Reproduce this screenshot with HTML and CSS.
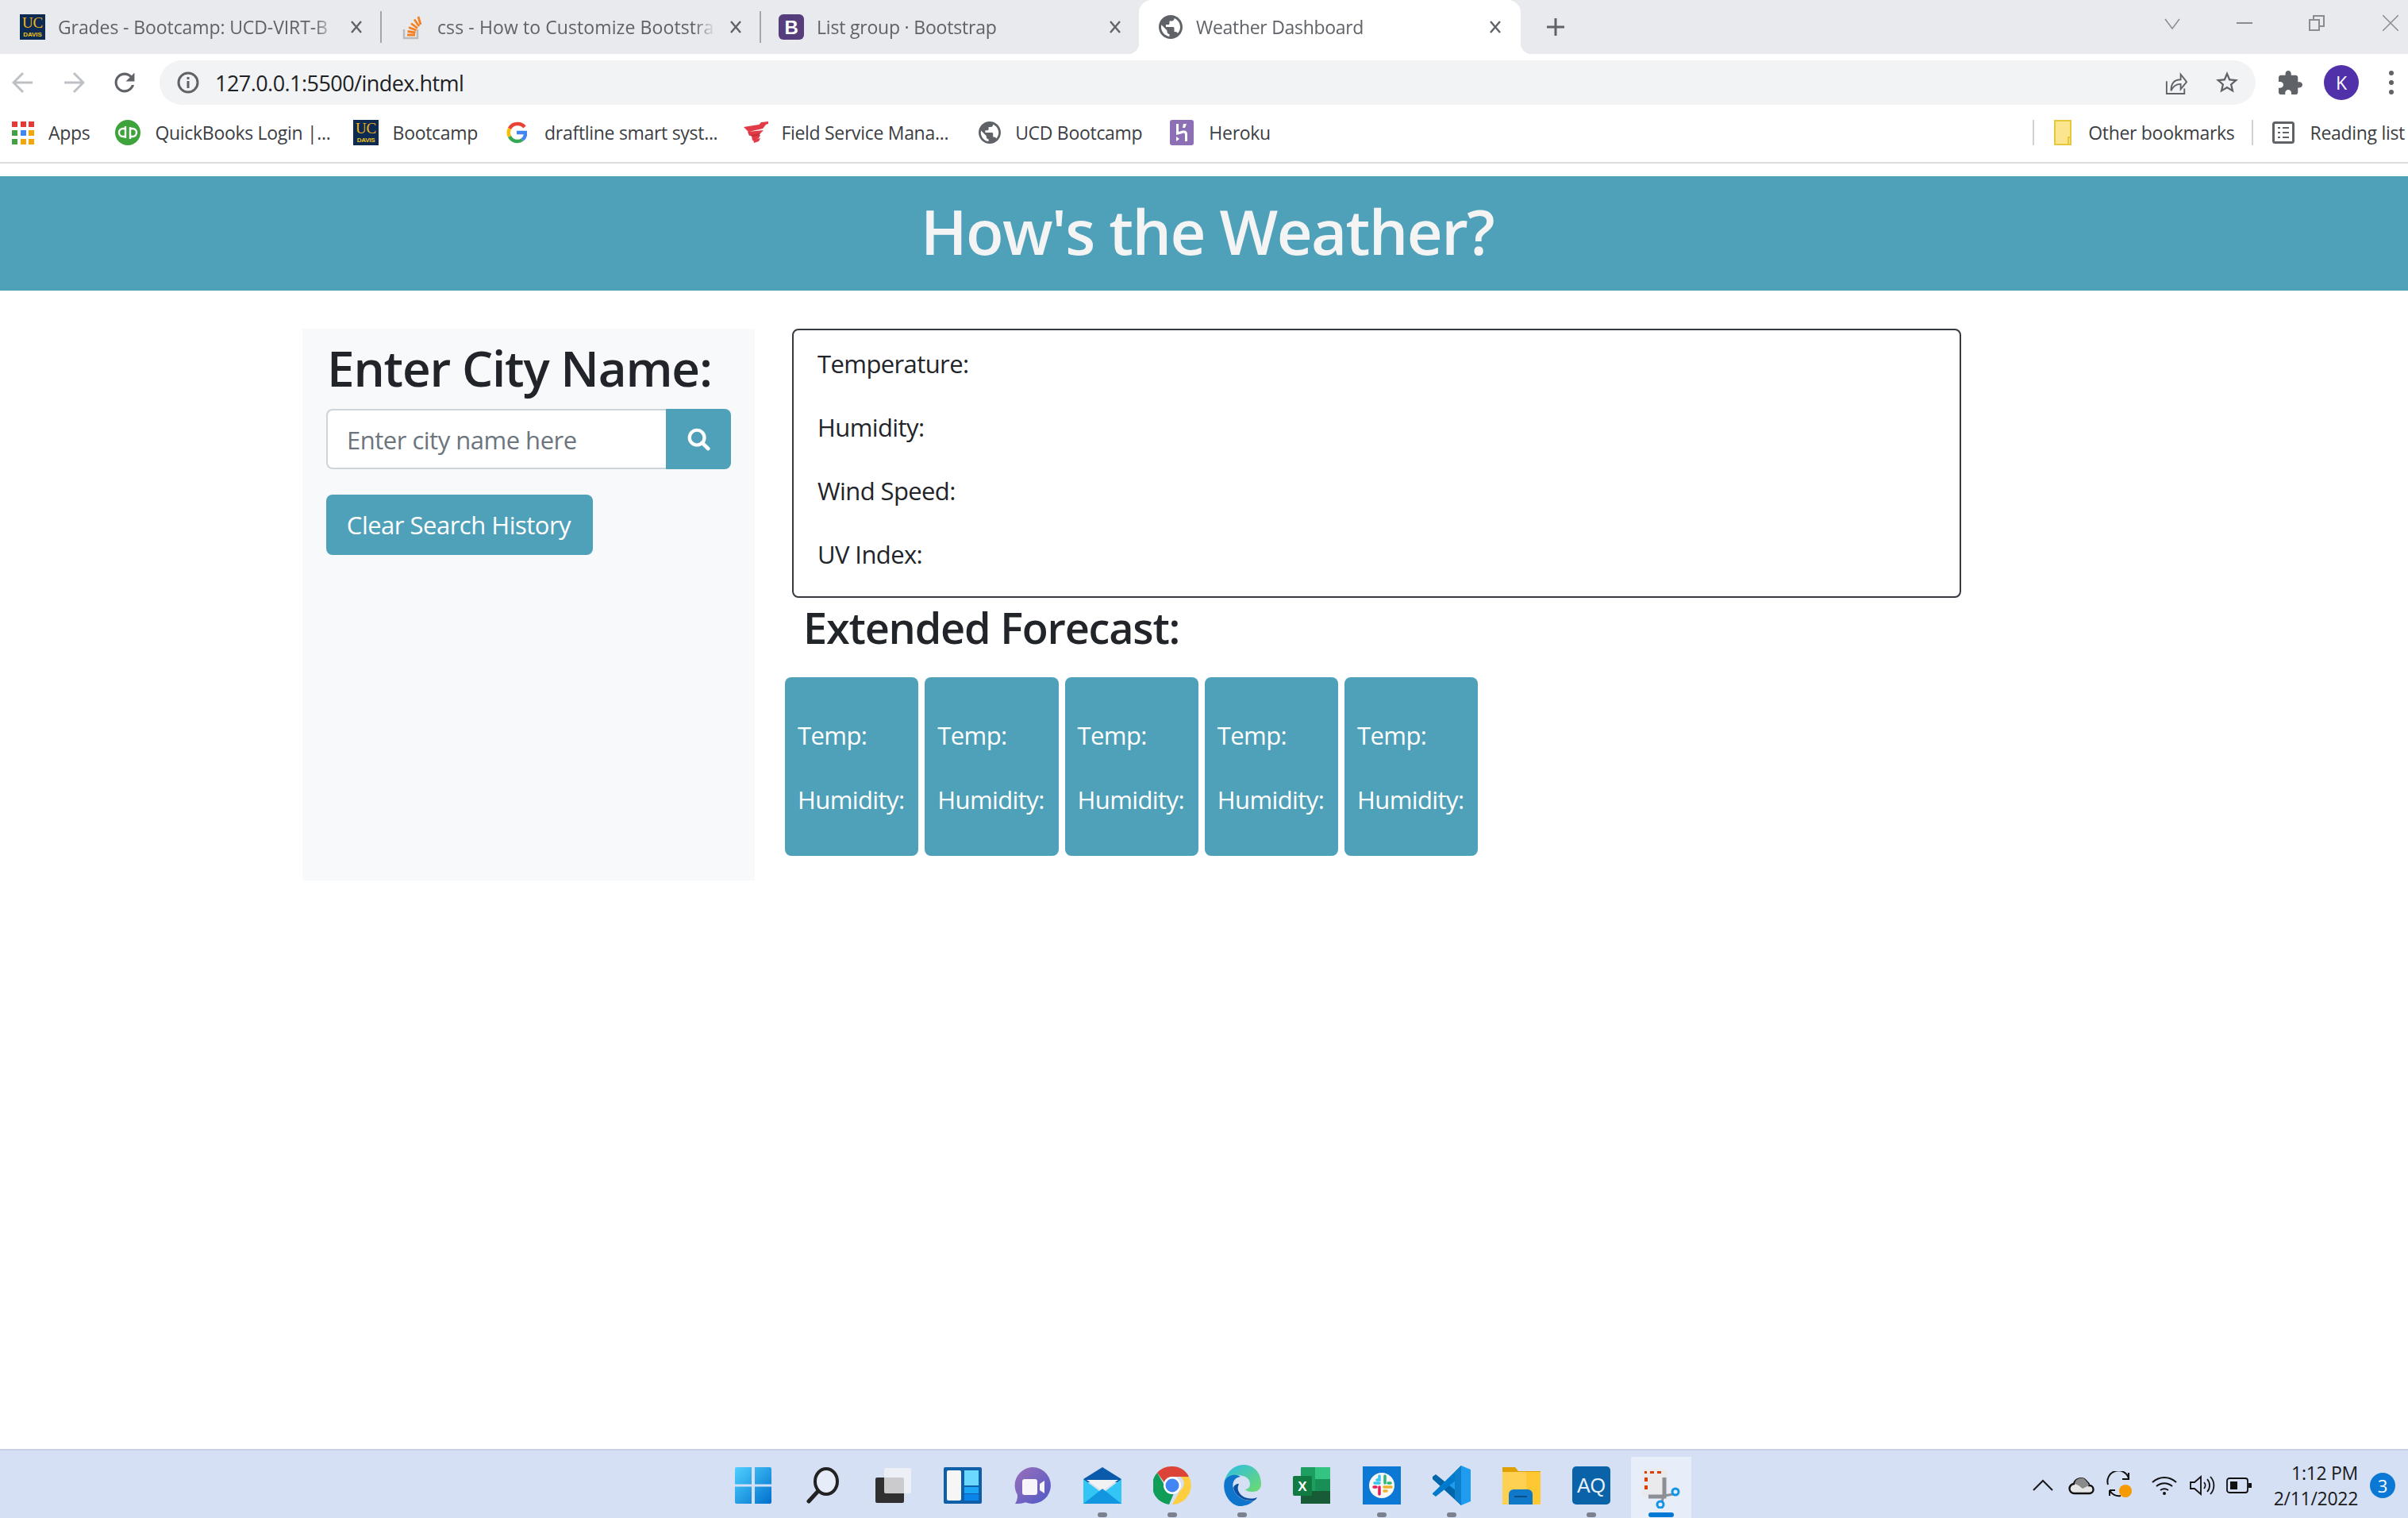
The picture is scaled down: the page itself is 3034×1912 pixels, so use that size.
FILE: index.html
```html
<!DOCTYPE html>
<html lang="en">
<head>
    <meta charset="UTF-8">
    <title>Weather Dashboard</title>
    <link rel="stylesheet" href="styles.css">
</head>
<body>
    <svg class="defs" width="0" height="0">
        <symbol id="uc" viewBox="0 0 32 32">
            <rect width="32" height="32" fill="#0d2a52"/>
            <text x="16" y="17" text-anchor="middle" font-family="Liberation Serif" font-size="19" fill="#f2b51c">UC</text>
            <text x="16" y="28" text-anchor="middle" font-family="Liberation Sans" font-weight="700" font-size="8" fill="#f2c21c">DAVIS</text>
        </symbol>
        <symbol id="globe" viewBox="2 2 20 20">
            <path fill="#5f6368" d="M12 2C6.48 2 2 6.48 2 12s4.48 10 10 10 10-4.48 10-10S17.52 2 12 2zm-1 17.93c-3.95-.49-7-3.85-7-7.93 0-.62.08-1.21.21-1.79L9 15v1c0 1.1.9 2 2 2v1.93zm6.9-2.54c-.26-.81-1-1.39-1.9-1.39h-1v-3c0-.55-.45-1-1-1H8v-2h2c.55 0 1-.45 1-1V7h2c1.1 0 2-.9 2-2v-.41c2.93 1.19 5 4.06 5 7.41 0 2.08-.8 3.97-2.1 5.39z"/>
        </symbol>
        <symbol id="close" viewBox="0 0 16 16">
            <path d="M2 1l12 14M14 1L2 15" stroke="#5f6368" stroke-width="2.400" fill="none"/>
        </symbol>
    </svg>

    <div class="tabstrip">
        <div class="tab tab-first">
            <svg class="favicon"><use href="#uc"/></svg>
            <span class="tab-title">Grades - Bootcamp: UCD-VIRT-B</span>
            <svg class="tab-close"><use href="#close"/></svg>
        </div>
        <div class="tab-sep"></div>
        <div class="tab tab-second">
            <svg class="favicon" viewBox="0 0 32 32">
                <path d="M6 19v11h17V19" fill="none" stroke="#bcbbbb" stroke-width="2.500"/>
                <path d="M10 26h10M10.500 21.500l10 1.500M12 16.500l9.500 3.500M15 11.500l8 6M19 6.500l6 8.500M24 3l3 10" fill="none" stroke="#f48024" stroke-width="2.800"/>
            </svg>
            <span class="tab-title">css - How to Customize Bootstra</span>
            <svg class="tab-close"><use href="#close"/></svg>
        </div>
        <div class="tab-sep"></div>
        <div class="tab tab-third">
            <svg class="favicon" viewBox="0 0 32 32">
                <rect width="32" height="32" rx="6" fill="#563d7c"/>
                <text x="16" y="25" text-anchor="middle" font-family="Liberation Sans" font-weight="700" font-size="24" fill="#fff">B</text>
            </svg>
            <span class="tab-title">List group · Bootstrap</span>
            <svg class="tab-close"><use href="#close"/></svg>
        </div>
        <div class="tab tab-active">
            <svg class="favicon favicon-globe"><use href="#globe"/></svg>
            <span class="tab-title">Weather Dashboard</span>
            <svg class="tab-close"><use href="#close"/></svg>
        </div>
        <svg class="new-tab" viewBox="0 0 24 24"><path d="M12 1v22M1 12h22" stroke="#5f6368" stroke-width="3"/></svg>
        <div class="window-controls">
            <svg viewBox="0 0 20 20"><path d="M1 5l9 12 9-12" fill="none" stroke="#8a8c90" stroke-width="1.500"/></svg>
            <svg viewBox="0 0 20 20"><path d="M0 10h20" stroke="#8a8c90" stroke-width="2"/></svg>
            <svg viewBox="0 0 20 20"><path d="M1 6h12v13H1zM6 6V1h13v13h-6" fill="none" stroke="#8a8c90" stroke-width="2"/></svg>
            <svg class="window-x" viewBox="0 0 20 20"><path d="M0 0l20 20M20 0L0 20" stroke="#8a8c90" stroke-width="1.500"/></svg>
        </div>
    </div>

    <div class="toolbar">
        <svg class="nav-icon" viewBox="0 0 28 28"><path d="M26 14H3M14 2L2 14l12 12" fill="none" stroke="#bdc1c6" stroke-width="3"/></svg>
        <svg class="nav-icon" viewBox="0 0 28 28"><path d="M2 14h23M14 2l12 12-12 12" fill="none" stroke="#bdc1c6" stroke-width="3"/></svg>
        <svg class="nav-icon" viewBox="3 3 18 18"><path fill="#5f6368" d="M17.650 6.350C16.200 4.900 14.210 4 12 4c-4.420 0-7.990 3.580-7.990 8s3.570 8 7.990 8c3.730 0 6.840-2.550 7.730-6h-2.080c-.82 2.330-3.040 4-5.650 4-3.310 0-6-2.690-6-6s2.690-6 6-6c1.660 0 3.140.69 4.220 1.780L13 11h7V4l-2.350 2.350z"/></svg>
        <div class="omnibox">
            <svg class="info-icon" viewBox="0 0 28 28">
                <circle cx="14" cy="14" r="12" fill="none" stroke="#5f6368" stroke-width="3"/>
                <path d="M14 12v9M14 7v3" stroke="#5f6368" stroke-width="3"/>
            </svg>
            <span class="url">127.0.0.1:5500/index.html</span>
            <svg class="omni-icon omni-share" viewBox="0 0 30 32">
                <path d="M2 14v17h24v-7" fill="none" stroke="#5f6368" stroke-width="2"/>
                <path d="M8 27c0-10 5-15 13-15V5l8 10-8 10v-7c-6 0-10 2-13 9z" fill="none" stroke="#5f6368" stroke-width="2"/>
            </svg>
            <svg class="omni-icon" viewBox="2 2 20 20"><path fill="#5f6368" d="M22 9.240l-7.190-.62L12 2 9.190 8.630 2 9.240l5.460 4.730L5.820 21 12 17.270 18.180 21l-1.630-7.030L22 9.240zM12 15.400l-3.760 2.270 1-4.280-3.320-2.880 4.380-.38L12 6.100l1.710 4.040 4.380.38-3.320 2.880 1 4.280L12 15.400z"/></svg>
        </div>
        <svg class="puzzle" viewBox="2 1 21 21"><path fill="#5f6368" d="M20.500 11H19V7c0-1.100-.9-2-2-2h-4V3.500C13 2.120 11.880 1 10.500 1S8 2.120 8 3.500V5H4c-1.100 0-1.990.9-1.990 2v3.800H3.500c1.490 0 2.700 1.210 2.700 2.700s-1.210 2.700-2.700 2.700H2V20c0 1.100.9 2 2 2h3.800v-1.500c0-1.490 1.210-2.700 2.700-2.700 1.490 0 2.700 1.210 2.700 2.700V22H17c1.100 0 2-.9 2-2v-4h1.500c1.380 0 2.500-1.120 2.500-2.500S21.880 11 20.500 11z"/></svg>
        <div class="avatar">K</div>
        <div class="kebab"><i></i><i></i><i></i></div>
    </div>

    <div class="bookmarks">
        <div class="bm bm-apps">
            <svg class="bm-icon" viewBox="0 0 28 32">
                <path fill="#e53935" d="M0 2h7v7H0zM11 2h7v7h-7zM21 2h7v7h-7z"/>
                <path fill="#43a047" d="M0 13h7v7H0z"/><path fill="#4285f4" d="M11 13h7v7h-7z"/><path fill="#f2a60c" d="M21 13h7v7h-7z"/>
                <path fill="#43a047" d="M0 24h7v7H0z"/><path fill="#f2a60c" d="M11 24h7v7h-7zM21 24h7v7h-7z"/>
            </svg>
            <span>Apps</span>
        </div>
        <div class="bm bm-qb">
            <svg class="bm-icon" viewBox="0 0 32 32">
                <circle cx="16" cy="16" r="16" fill="#3fa33c"/>
                <path d="M13 8v15M13 11H10a5 5 0 0 0 0 10h3M19 24V9M19 21h3a5 5 0 0 0 0-10h-3" fill="none" stroke="#fff" stroke-width="2.400"/>
            </svg>
            <span>QuickBooks Login |...</span>
        </div>
        <div class="bm bm-camp">
            <svg class="bm-icon"><use href="#uc"/></svg>
            <span>Bootcamp</span>
        </div>
        <div class="bm bm-draft">
            <svg class="bm-icon bm-google" viewBox="0 0 26 28">
                <path d="M23 7a11 11 0 0 0-9-4 11 11 0 0 0-10 6" fill="none" stroke="#ea4335" stroke-width="4.500"/>
                <path d="M4 9a11 11 0 0 0 0 10" fill="none" stroke="#fbbc05" stroke-width="4.500"/>
                <path d="M4 19a11 11 0 0 0 10 6 11 11 0 0 0 6-2" fill="none" stroke="#34a853" stroke-width="4.500"/>
                <path d="M20 23a10 10 0 0 0 4-9H13" fill="none" stroke="#4285f4" stroke-width="4.500"/>
            </svg>
            <span>draftline smart syst...</span>
        </div>
        <div class="bm bm-field">
            <svg class="bm-icon" viewBox="0 0 32 32">
                <path fill="#e23a46" d="M23 3l9-1v3l-14 4zM1 9l19-3 9 0-4 5-18 4zM6 15l20-2-5 5-13 2zM11 20l9-1 2 0-2 4-8 3zM13 25l9-2-2 4-6 2z"/>
                <path fill="#c9303c" d="M9 19l13-2-2 3-9 1z"/>
            </svg>
            <span>Field Service Mana...</span>
        </div>
        <div class="bm bm-ucd">
            <svg class="bm-icon bm-globe"><use href="#globe"/></svg>
            <span>UCD Bootcamp</span>
        </div>
        <div class="bm bm-heroku">
            <svg class="bm-icon" viewBox="0 0 30 32">
                <rect width="30" height="32" rx="3" fill="#8c6fb5"/>
                <path fill="#fff" d="M8 5h3v10c3-1 6-2 9-1 2 1 2 3 2 5v8h-3v-8c0-2-1-3-3-2l-8 2zM17 5h4l-2 5h-3zM8 27v-6l4 3z"/>
            </svg>
            <span>Heroku</span>
        </div>
        <div class="bm-right">
            <div class="bm-sep"></div>
            <svg class="bm-folder" viewBox="0 0 22 32">
                <path d="M1 1h20v30H1z" fill="#fbe68f" stroke="#e7c83d" stroke-width="2"/>
                <path d="M18 31v-9h3v9" fill="none" stroke="#e7c83d" stroke-width="2"/>
            </svg>
            <span class="bm-label">Other bookmarks</span>
            <div class="bm-sep"></div>
            <svg class="bm-reading" viewBox="0 0 28 28">
                <rect x="1.500" y="1.500" width="25" height="25" rx="2" fill="none" stroke="#5f6368" stroke-width="3"/>
                <path d="M7 8h3M13 8h8M7 14h3M13 14h8M7 20h3M13 20h8" stroke="#5f6368" stroke-width="2"/>
            </svg>
            <span class="bm-label">Reading list</span>
        </div>
    </div>

    <main class="page">
        <header class="banner">
            <h1>How's the Weather?</h1>
        </header>
        <div class="content">
            <aside class="sidebar">
                <h2>Enter City Name:</h2>
                <div class="search">
                    <div class="search-input">Enter city name here</div>
                    <div class="search-btn">
                        <svg viewBox="0 0 32 32" width="30" height="30">
                            <circle cx="14" cy="14" r="10" fill="none" stroke="#fff" stroke-width="4.500"/>
                            <path d="M21 21l8 8" stroke="#fff" stroke-width="5" stroke-linecap="round"/>
                        </svg>
                    </div>
                </div>
                <div class="clear-btn">Clear Search History</div>
            </aside>
            <section class="results">
                <div class="current">
                    <p>Temperature:</p>
                    <p>Humidity:</p>
                    <p>Wind Speed:</p>
                    <p>UV Index:</p>
                </div>
                <h3>Extended Forecast:</h3>
                <div class="forecast">
                    <div class="card"><p>Temp:</p><p>Humidity:</p></div>
                    <div class="card"><p>Temp:</p><p>Humidity:</p></div>
                    <div class="card"><p>Temp:</p><p>Humidity:</p></div>
                    <div class="card"><p>Temp:</p><p>Humidity:</p></div>
                    <div class="card"><p>Temp:</p><p>Humidity:</p></div>
                </div>
            </section>
        </div>
    </main>

    <footer class="taskbar">
        <div class="dock">
            <div class="dock-item">
                <svg viewBox="0 0 46 46" width="46" height="46">
                    <defs>
                        <linearGradient id="win" x1="0" y1="0" x2="1" y2="1"><stop offset="0" stop-color="#4fd0ff"/><stop offset="1" stop-color="#0070cc"/></linearGradient>
                    </defs>
                    <path fill="url(#win)" d="M2 0h19v21.500H0V2a2 2 0 0 1 2-2zM25 0h19a2 2 0 0 1 2 2v19.500H25zM0 24.500h21V46H2a2 2 0 0 1-2-2zM25 24.500h21V44a2 2 0 0 1-2 2H25z"/>
                </svg>
            </div>
            <div class="dock-item">
                <svg viewBox="0 0 46 46" width="46" height="46">
                    <ellipse cx="27" cy="18" rx="14" ry="16" fill="#e6ecf8" stroke="#222" stroke-width="4"/>
                    <path d="M16 31L5 43" stroke="#222" stroke-width="5" stroke-linecap="round"/>
                </svg>
            </div>
            <div class="dock-item">
                <svg viewBox="0 0 46 46" width="46" height="46">
                    <rect x="1" y="13" width="36" height="32" rx="2" fill="#303030"/>
                    <rect x="12" y="1" width="34" height="32" rx="2" fill="#f2f3f6" fill-opacity=".8"/>
                </svg>
            </div>
            <div class="dock-item">
                <svg viewBox="0 0 48 46" width="48" height="46">
                    <rect width="48" height="46" rx="2" fill="#0f5ea8"/>
                    <rect x="4" y="4" width="18" height="38" rx="2" fill="#f6f6f6"/>
                    <rect x="26" y="4" width="18" height="19" fill="#6bd8ff"/>
                    <rect x="26" y="25" width="18" height="8" fill="#1ba6f5"/>
                    <rect x="26" y="34" width="18" height="8" fill="#0b85ea"/>
                </svg>
            </div>
            <div class="dock-item">
                <svg viewBox="0 0 46 46" width="46" height="46">
                    <defs>
                        <linearGradient id="chat" x1="0" y1="0" x2="1" y2="1"><stop offset="0" stop-color="#9a70b8"/><stop offset="1" stop-color="#5059c9"/></linearGradient>
                    </defs>
                    <path fill="url(#chat)" d="M23 0a23 23 0 1 1-9 44.200C10 46 6 46 1 46c2-3 3-6 3-11A23 23 0 0 1 23 0z"/>
                    <rect x="10" y="15" width="19" height="20" rx="3" fill="#f7f4fa"/>
                    <path fill="#f7f4fa" d="M32 21l6-4v16l-6-4z"/>
                </svg>
            </div>
            <div class="dock-item dock-open">
                <svg viewBox="0 0 48 46" width="48" height="46">
                    <path fill="#0a5bab" d="M24 0l24 15v4H0v-4z"/>
                    <path fill="#f2f2f4" d="M4 16h40L24 30z"/>
                    <path fill="#33c6f4" d="M0 15l24 18 24-18v31H0z"/>
                    <path fill="#1296e0" d="M0 46l24-19 24 19z"/>
                </svg>
            </div>
            <div class="dock-item dock-open">
                <svg viewBox="0 0 48 50" width="48" height="50">
                    <path fill="#db4437" d="M24 1a23 24 0 0 1 21 13H24a10 10 0 0 0-10 7L5 9A24 24 0 0 1 24 1z"/>
                    <path fill="#0f9d58" d="M5 9l10 17a10 10 0 0 0 11 9l-6 14A24 24 0 0 1 5 9z"/>
                    <path fill="#ffcd40" d="M45 14a24 24 0 0 1-21 35l10-18a10 10 0 0 0 0-17z"/>
                    <circle cx="24" cy="25" r="11" fill="#fff"/>
                    <circle cx="24" cy="25" r="8.500" fill="#4285f4"/>
                </svg>
            </div>
            <div class="dock-item dock-open">
                <svg viewBox="0 0 48 52" width="48" height="52">
                    <defs>
                        <linearGradient id="edge" x1="0" y1="0" x2="1" y2="1"><stop offset="0" stop-color="#2bbbe8"/><stop offset="1" stop-color="#6fdc6c"/></linearGradient>
                    </defs>
                    <path fill="url(#edge)" d="M2 20C6 6 16 0 26 0c13 0 22 10 22 24 0 7-5 10-11 10-4 0-8-1-9-3 6-1 7-6 5-11C30 12 12 10 2 20z"/>
                    <path fill="#0f74cc" d="M2 20c5-8 14-9 20-5-8 1-11 8-9 15 2 9 13 17 26 15-5 5-12 7-17 7C10 52-2 36 2 20z"/>
                    <path fill="#0c4ea0" d="M13 29c2 10 12 17 26 16 2-1 3-2 4-4-10 4-21 0-24-9-1-3 0-6 1-8-4 0-6 2-7 5z"/>
                </svg>
            </div>
            <div class="dock-item">
                <svg viewBox="0 0 48 48" width="48" height="48">
                    <rect x="10" y="1" width="37" height="46" rx="1" fill="#1d9f62"/>
                    <rect x="28" y="1" width="19" height="15" fill="#33c481"/>
                    <rect x="28" y="16" width="19" height="15" fill="#21a366"/>
                    <rect x="10" y="31" width="37" height="16" fill="#185c37"/>
                    <rect x="28" y="16" width="19" height="15" fill="#107c41" fill-opacity=".5"/>
                    <rect y="12" width="24" height="25" rx="2" fill="#107c41"/>
                    <text x="12" y="31" text-anchor="middle" font-family="Liberation Sans" font-weight="700" font-size="17" fill="#fff">X</text>
                </svg>
            </div>
            <div class="dock-item dock-open">
                <svg viewBox="0 0 48 48" width="48" height="48">
                    <rect width="48" height="48" fill="#0a78d4"/>
                    <circle cx="24" cy="24" r="16" fill="#f8f8f4"/>
                    <path d="M21 12v5h-3M15 21h6" fill="none" stroke="#36c5f0" stroke-width="3.500" stroke-linecap="round"/>
                    <path d="M28 12v9M32 21h3" fill="none" stroke="#2eb67d" stroke-width="3.500" stroke-linecap="round"/>
                    <path d="M27 26h9M27 31h3" fill="none" stroke="#ecb22e" stroke-width="3.500" stroke-linecap="round"/>
                    <path d="M21 26v9M14 26h3" fill="none" stroke="#e01e5a" stroke-width="3.500" stroke-linecap="round"/>
                </svg>
            </div>
            <div class="dock-item dock-open">
                <svg viewBox="0 0 48 50" width="48" height="50">
                    <path fill="#1f9cf0" d="M36 0l12 5v40l-12 5L14 29z"/>
                    <path fill="#0065a9" d="M0 14l4-3 32 26v13L0 17z"/>
                    <path fill="#007acc" d="M36 0v13L4 39l-4-3 0-1z"/>
                    <path fill="#0d7fcc" d="M36 0v50l-8-8V8z"/>
                </svg>
            </div>
            <div class="dock-item">
                <svg viewBox="0 0 48 50" width="48" height="50">
                    <path fill="#dfa000" d="M0 2h16l4 5h28v10H0z"/>
                    <path fill="#ffd152" d="M0 8h48v39a2 2 0 0 1-2 2H0z"/>
                    <path fill="#ffb900" d="M30 8h18v41H30z" fill-opacity=".4"/>
                    <path fill="#0f78c8" d="M8 49V36a6 6 0 0 1 6-6h18a6 6 0 0 1 6 6v13z"/>
                    <path d="M15 39h16" stroke="#0a4f8a" stroke-width="2"/>
                </svg>
            </div>
            <div class="dock-item dock-open">
                <svg viewBox="0 0 48 48" width="48" height="48">
                    <rect width="48" height="48" rx="5" fill="#0a62a9"/>
                    <text x="24" y="33" text-anchor="middle" font-family="Liberation Sans" font-size="25" fill="#e8f0f8">AQ</text>
                </svg>
            </div>
            <div class="dock-item dock-active">
                <svg viewBox="0 0 50 52" width="50" height="52">
                    <rect x="1" y="2" width="32" height="36" rx="2" fill="#eaeaec"/>
                    <path d="M4 8V5h3v3zM11 5h5v3h-5zM20 5h5v3h-5zM4 13h4v5H4zM4 23h4v5H4z" fill="#dc3c00"/>
                    <path d="M29 13v24H9" fill="none" stroke="#8c8f96" stroke-width="5"/>
                    <path d="M29 36l11-2M28 36l-2 8" stroke="#8c8f96" stroke-width="3"/>
                    <circle cx="43" cy="31" r="4" fill="none" stroke="#1295e8" stroke-width="3"/>
                    <circle cx="24" cy="47" r="4" fill="none" stroke="#1295e8" stroke-width="3"/>
                </svg>
            </div>
        </div>
        <div class="tray">
            <svg class="tray-chev" viewBox="0 0 26 16"><path d="M1 14L13 2l12 12" fill="none" stroke="#1a1a1a" stroke-width="2"/></svg>
            <svg class="tray-cloud" viewBox="0 0 34 24">
                <path fill="#e6e6e6" stroke="#111" stroke-width="2.400" d="M8 22a6 6 0 0 1-1-12 9 9 0 0 1 16-3 7 7 0 0 1 3 5 5 5 0 0 1 1 10z"/>
                <path fill="#8a8a8a" d="M8 10a8 8 0 0 1 15-3 7 7 0 0 1 3 5l-8 4-5-4z"/>
            </svg>
            <svg class="tray-sync" viewBox="0 0 34 36">
                <path d="M2 17A13 13 0 0 1 28 9" fill="none" stroke="#111" stroke-width="2"/>
                <path d="M28 2v8h-8M4 24h7M4 24v7M4 24a13 13 0 0 0 14 7" fill="none" stroke="#111" stroke-width="2"/>
                <circle cx="24" cy="25" r="8" fill="#f59a00"/>
            </svg>
            <svg class="tray-wifi" viewBox="0 0 32 24">
                <path d="M1 8c9-8 21-8 30 0M6 13c6-5 14-5 20 0M11 18c3-2 7-2 10 0" fill="none" stroke="#111" stroke-width="2"/>
                <circle cx="16" cy="22" r="2" fill="#111"/>
            </svg>
            <svg class="tray-vol" viewBox="0 0 32 26">
                <path d="M1 9v8h5l8 7V2L6 9z" fill="none" stroke="#111" stroke-width="1.800"/>
                <path d="M18 9a6 6 0 0 1 0 8M22 5a12 12 0 0 1 0 16M26 2a16 16 0 0 1 0 22" fill="none" stroke="#111" stroke-width="1.800"/>
            </svg>
            <svg class="tray-batt" viewBox="0 0 32 20">
                <rect x="1" y="1" width="26" height="18" rx="3" fill="none" stroke="#111" stroke-width="1.800"/>
                <rect x="5" y="5" width="9" height="10" fill="#111"/>
                <rect x="28" y="7" width="4" height="6" fill="#111"/>
            </svg>
            <div class="clock">
                <span>1:12 PM</span>
                <span>2/11/2022</span>
            </div>
            <div class="badge">3</div>
        </div>
    </footer>
</body>
</html>
```

FILE: styles.css
```css
* {
    box-sizing: border-box;
}

html, body {
    margin: 0;
    padding: 0;
}

body {
    width: 3034px;
    height: 1912px;
    overflow: hidden;
    display: flex;
    flex-direction: column;
    background: #fff;
    font-family: "Open Sans", "Noto Sans", sans-serif;
    color: #212529;
}

.defs {
    display: none;
}

/* browser chrome */
.tabstrip {
    display: flex;
    align-items: center;
    height: 68px;
    background: #e8eaed;
    flex: none;
}

.tab {
    display: flex;
    align-items: center;
    width: 476px;
    height: 68px;
    padding: 0 22px;
    font-size: 23px;
    letter-spacing: -0.3px;
    color: #5f6368;
}

.tab-first {
    margin-left: 3px;
    letter-spacing: -0.1px;
}

.tab-second {
    letter-spacing: 0.1px;
}

.tab-third {
    letter-spacing: -0.2px;
}

.tab-sep {
    width: 2px;
    height: 40px;
    background: #a4a7ab;
}

.favicon {
    flex: none;
    width: 32px;
    height: 32px;
    margin-right: 16px;
}

.favicon-globe {
    width: 30px;
    height: 30px;
    margin-right: 17px;
}

.tab-title {
    flex: 1;
    min-width: 0;
    margin-right: 17px;
    white-space: nowrap;
    overflow: hidden;
    -webkit-mask-image: linear-gradient(to right, #000 92%, transparent);
    mask-image: linear-gradient(to right, #000 92%, transparent);
}

.tab-close {
    flex: none;
    width: 16px;
    height: 16px;
}

.tab-active {
    position: relative;
    width: 481px;
    padding: 0 24px 0 25px;
    background: #fff;
    border-radius: 16px 16px 0 0;
}

.tab-active::before,
.tab-active::after {
    content: "";
    position: absolute;
    bottom: 0;
    width: 14px;
    height: 14px;
}

.tab-active::before {
    left: -14px;
    background: radial-gradient(circle at 0 0, transparent 14px, #fff 14.5px);
}

.tab-active::after {
    right: -14px;
    background: radial-gradient(circle at 100% 0, transparent 14px, #fff 14.5px);
}

.new-tab {
    width: 24px;
    height: 24px;
    margin-left: 32px;
}

.window-controls {
    display: flex;
    align-items: center;
    gap: 71px;
    margin-left: auto;
    padding: 0 12px 10px 0;
}

.window-controls svg {
    width: 20px;
    height: 20px;
}

.window-x {
    margin-left: 2px;
}

.toolbar {
    display: flex;
    align-items: center;
    height: 64px;
    padding: 8px 0 0 15px;
    flex: none;
}

.nav-icon {
    width: 28px;
    height: 28px;
    margin-right: 36px;
}

.omnibox {
    display: flex;
    align-items: center;
    width: 2641px;
    height: 56px;
    margin-left: -6px;
    padding: 0 22px;
    background: #f1f3f4;
    border-radius: 28px;
}

.info-icon {
    width: 28px;
    height: 28px;
    margin-right: 20px;
}

.url {
    font-size: 27px;
    letter-spacing: -0.55px;
    color: #202124;
}

.omni-icon {
    width: 28px;
    height: 28px;
    margin-left: 36px;
}

.omni-share {
    margin-left: auto;
    height: 30px;
}

.puzzle {
    width: 30px;
    height: 30px;
    margin-left: 29px;
}

.avatar {
    display: flex;
    align-items: center;
    justify-content: center;
    width: 44px;
    height: 44px;
    margin-left: 27px;
    border-radius: 50%;
    background: #5031a9;
    color: #fff;
    font-size: 23px;
}

.kebab {
    display: flex;
    flex-direction: column;
    gap: 6px;
    margin-left: 38px;
}

.kebab i {
    display: block;
    width: 6px;
    height: 6px;
    border-radius: 50%;
    background: #5f6368;
}

.bookmarks {
    display: flex;
    align-items: center;
    height: 74px;
    padding: 0 0 2px 15px;
    border-bottom: 2px solid #dadce0;
    font-size: 23px;
    letter-spacing: -0.3px;
    color: #3c4043;
    flex: none;
    overflow: hidden;
}

.bm {
    display: flex;
    align-items: center;
    gap: 18px;
    white-space: nowrap;
}

.bm-icon {
    flex: none;
    width: 32px;
    height: 32px;
}

.bm-apps .bm-icon {
    width: 28px;
}

.bm-google {
    width: 26px;
    height: 28px;
}

.bm-globe {
    width: 28px;
    height: 28px;
}

.bm-qb { margin-left: 32px; }
.bm-camp { margin-left: 28px; }
.bm-draft { margin-left: 36px; gap: 22px; }
.bm-field { margin-left: 32px; }
.bm-field .bm-icon { margin-right: -2px; }
.bm-ucd { margin-left: 38px; }
.bm-heroku { margin-left: 34px; }

.bm-right {
    display: flex;
    align-items: center;
    margin-left: auto;
    white-space: nowrap;
}

.bm-sep {
    width: 2px;
    height: 32px;
    background: #d0d2d6;
    margin-right: 24px;
}

.bm-folder {
    width: 24px;
    height: 32px;
    margin-right: 20px;
}

.bm-reading {
    width: 28px;
    height: 28px;
    margin-right: 19px;
}

.bm-label {
    margin-right: 22px;
}

.bm-right .bm-label:last-child {
    margin-right: 4px;
}

/* weather page */
.page {
    flex: 1;
    min-height: 0;
    padding-top: 16px;
}

.banner {
    display: flex;
    align-items: center;
    justify-content: center;
    height: 144px;
    padding-bottom: 4px;
    background: #4fa1b9;
    color: #f4f4f4;
}

.banner h1 {
    margin: 0 0 0 8px;
    font-size: 78px;
    font-weight: 600;
    line-height: 1.2;
    letter-spacing: -1.6px;
}

.content {
    display: flex;
    align-items: flex-start;
    padding: 48px 0 0 381px;
}

.sidebar {
    width: 570px;
    height: 695px;
    padding: 0 30px;
    background: #f8f9fa;
}

.sidebar h2 {
    margin: 0;
    padding: 0 1px;
    font-size: 62px;
    font-weight: 600;
    line-height: 98px;
    height: 101px;
    letter-spacing: -1.2px;
    white-space: nowrap;
}

.search {
    display: flex;
    height: 76px;
}

.search-input {
    display: flex;
    align-items: center;
    width: 428px;
    padding: 2px 0 0 24px;
    background: #fff;
    border: 2px solid #ced4da;
    border-right: 0;
    border-radius: 8px 0 0 8px;
    font-size: 31px;
    letter-spacing: -0.5px;
    color: #6c757d;
}

.search-btn {
    display: flex;
    align-items: center;
    justify-content: center;
    width: 82px;
    background: #4fa1b9;
    border-radius: 0 8px 8px 0;
}

.clear-btn {
    display: flex;
    align-items: center;
    justify-content: center;
    width: 336px;
    height: 76px;
    margin-top: 32px;
    padding-right: 2px;
    background: #4fa1b9;
    border-radius: 8px;
    color: #fff;
    font-size: 31px;
    letter-spacing: -0.5px;
}

.results {
    margin-left: 38px;
}

.current {
    width: 1473px;
    height: 339px;
    margin-left: 9px;
    padding: 19px 30px;
    border: 2px solid #343a40;
    border-radius: 8px;
    font-size: 31px;
    letter-spacing: -0.6px;
}

.current p {
    margin: 0 0 34px;
    line-height: 46px;
}

.results h3 {
    margin: 5px 0 30px 23px;
    font-size: 54px;
    font-weight: 600;
    line-height: 65px;
    letter-spacing: -1.2px;
}

.forecast {
    display: flex;
    gap: 8px;
}

.card {
    width: 168.25px;
    height: 225px;
    padding: 50px 0 0 16px;
    background: #4fa1b9;
    border-radius: 8px;
    color: #fff;
    font-size: 31px;
    letter-spacing: -0.6px;
}

.card p {
    margin: 0 0 35px;
    line-height: 46px;
}

/* windows taskbar */
.taskbar {
    display: flex;
    align-items: flex-start;
    height: 87px;
    padding-left: 905px;
    background: #d6e0f5;
    border-top: 2px solid #c6d0e6;
    flex: none;
}

.dock {
    display: flex;
}

.dock-item {
    position: relative;
    display: flex;
    align-items: center;
    justify-content: center;
    width: 88px;
    height: 85px;
    padding-top: 3px;
}

.dock-open::after,
.dock-active::after {
    content: "";
    position: absolute;
    bottom: 1px;
    width: 12px;
    height: 6px;
    border-radius: 3px;
    background: #7a808c;
}

.dock-active {
    background: #e8eef9;
    background-clip: content-box;
    padding: 8px 6px 0;
    border-radius: 6px;
}

.dock-active::after {
    width: 32px;
    background: #0078d4;
}

.tray {
    display: flex;
    align-items: center;
    height: 85px;
    padding: 3px 16px 0 0;
    margin-left: auto;
}

.tray svg {
    flex: none;
}

.tray-chev {
    width: 26px;
    height: 16px;
}

.tray-cloud {
    width: 34px;
    height: 24px;
    margin-left: 19px;
}

.tray-sync {
    width: 34px;
    height: 36px;
    margin-left: 14px;
}

.tray-wifi {
    width: 32px;
    height: 24px;
    margin-left: 23px;
}

.tray-vol {
    width: 32px;
    height: 26px;
    margin-left: 16px;
}

.tray-batt {
    width: 32px;
    height: 20px;
    margin-left: 14px;
}

.clock {
    display: flex;
    flex-direction: column;
    align-items: flex-end;
    width: 118px;
    margin-left: 16px;
    font-size: 23px;
    line-height: 32px;
    letter-spacing: -0.3px;
    color: #1a1a1a;
}

.badge {
    display: flex;
    align-items: center;
    justify-content: center;
    width: 32px;
    height: 32px;
    margin-left: 15px;
    border-radius: 50%;
    background: #0a78d4;
    color: #fff;
    font-size: 22px;
}
```
